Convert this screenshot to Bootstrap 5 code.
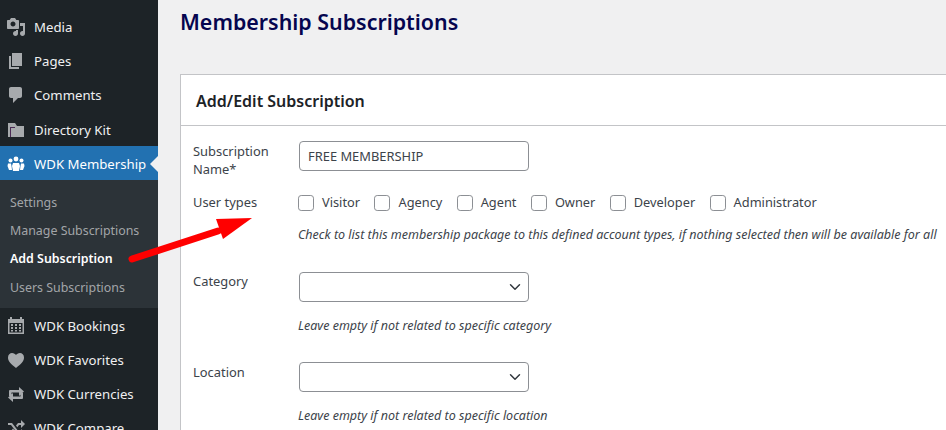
<!DOCTYPE html>
<html lang="en">
<head>
<meta charset="utf-8">
<title>Membership Subscriptions</title>
<link href="https://cdn.jsdelivr.net/npm/bootstrap@5.3.0/dist/css/bootstrap.min.css" rel="stylesheet">
<style>
html,body{height:430px;overflow:hidden}
body{background:#f0f0f1;font-family:"Noto Sans","Open Sans",sans-serif;font-size:12.9px;color:#3c434a;position:relative}
.wp-shell{height:430px;overflow:hidden}
.wp-side{width:158px;flex:none;background:#1d2327;padding-top:9px;height:430px;overflow:hidden}
.wp-item{height:34px;color:#f0f0f1;font-size:13.2px;padding-left:6px;padding-top:4px;gap:8px;white-space:nowrap;position:relative;text-decoration:none}
.wp-item svg{width:20px;height:20px;flex:none;fill:#a7aaad;margin-top:-2px}
.wp-item.wp-on{background:#2271b1;color:#fff;padding-top:3px}
.wp-item.wp-on svg{fill:#fff}
.wp-item.wp-on::after{content:"";position:absolute;right:0;top:10px;border:8px solid transparent;border-right-color:#f0f0f1;border-left-width:0}
.wp-dir{margin-top:1px}
.wp-sub{background:#2c3338;height:128px;padding-top:9px;font-size:12.4px}
.wp-sub a{display:block;height:28.200px;line-height:28px;padding-left:10px;color:#c3c4c7cc;text-decoration:none;white-space:nowrap}
.wp-sub a.wp-cur{color:#fff;font-weight:600}
.wp-main{flex:1;min-width:0;padding-left:22px;overflow:hidden}
.wp-title{font-size:21.4px;font-weight:600;color:#05054f;line-height:28px;margin:8px 0 38px 0}
.wp-panel{background:#fff;border:1px solid #c3c4c7;border-right:0;border-radius:0;width:800px;height:400px}
.wp-head{height:51px;padding-left:15px;border-bottom:1px solid #c3c4c7;font-size:16px;font-weight:600;color:#1d2327;line-height:52px}
.wp-row{display:flex;padding-left:12px}
.wp-lab{width:106px;flex:none;line-height:18px;color:#3c434a}
.wp-input,.wp-select{width:230px;height:30px;font-size:12.9px;color:#3c434a;border:1px solid #8c8f94;border-radius:4px;padding:0 8px;background-color:#fff;font-family:inherit;min-height:30px}
.wp-select{background-position:right 5px center;background-size:16px 12px}
.wp-help{font-style:italic;font-size:12.5px;color:#3c434a;margin:0 0 0 -1px;white-space:nowrap;line-height:18px}
.wp-checks{gap:14.400px;height:18px;margin-left:-1px;font-size:12.8px}
.wp-checks label{display:flex;align-items:center;gap:8px;white-space:nowrap}
.wp-check{width:16px;height:16px;margin:0;border:1px solid #8c8f94;border-radius:4px;flex:none}
.wp-arrow{position:absolute;left:125px;top:210px;width:135px;height:56px}
.wp-r1{margin-top:15px}.wp-r1 .wp-lab{margin-top:1px}
.wp-r2{margin-top:16px}.wp-r2 .wp-lab{margin-top:-1px}
.wp-help.wp-h1{margin-top:14px}
.wp-r3{margin-top:28px}
.wp-help.wp-h2{margin-top:15px}
.wp-r4{margin-top:27px}.wp-r4 .wp-lab{margin-top:1px}
</style>
</head>
<body>
<div class="d-flex wp-shell">
<nav class="wp-side">
<a class="wp-item d-flex align-items-center" href="#"><svg viewBox="0 0 20 20"><path fill-rule="evenodd" d="M13 11V4c0-.55-.45-1-1-1h-1.670L9 1H5L3.670 3H2c-.55 0-1 .45-1 1v7c0 .55.45 1 1 1h10c.55 0 1-.45 1-1zM7 4.500c1.380 0 2.500 1.120 2.500 2.500S8.380 9.500 7 9.500 4.500 8.380 4.500 7 5.620 4.500 7 4.500zM14 6h5v10.500c0 1.380-1.120 2.500-2.500 2.500S14 17.880 14 16.500s1.120-2.500 2.500-2.500c.17 0 .34.020.5.050V9h-3V6zm-4 8.050V13h2v3.500c0 1.380-1.120 2.500-2.500 2.500S7 17.880 7 16.500 8.120 14 9.500 14c.17 0 .34.020.5.050z"/></svg>Media</a>
<a class="wp-item d-flex align-items-center" href="#"><svg viewBox="0 0 20 20"><path d="M6 15V2h10v13H6zm-1 1h8v2H3V5h2v11z"/></svg>Pages</a>
<a class="wp-item d-flex align-items-center" href="#"><svg viewBox="0 0 20 20"><path d="M5 2h9c1.100 0 2 .9 2 2v7c0 1.100-.9 2-2 2h-2l-5 5v-5H5c-1.100 0-2-.9-2-2V4c0-1.100.9-2 2-2z"/></svg>Comments</a>
<a class="wp-item wp-dir d-flex align-items-center" href="#"><svg viewBox="0 0 20 20"><path d="M2 3h7l2 3h7v11H2z"/><path d="M4 7h5v1H5v9H4z" fill="#4b2a55"/></svg>Directory Kit</a>
<a class="wp-item wp-on d-flex align-items-center" href="#"><svg viewBox="0 0 20 20"><circle cx="10" cy="5" r="2.400"/><circle cx="4.500" cy="6.500" r="2"/><circle cx="15.500" cy="6.500" r="2"/><path d="M7 9h6l1 3-1 5H7l-1-5zM2 9.500h3l.5 2.500L6 16H3l-1.500-4zM15 9.500h3l.5 2.500L17 16h-3l.5-4z"/></svg>WDK Membership</a>
<div class="wp-sub">
<a href="#">Settings</a>
<a href="#">Manage Subscriptions</a>
<a href="#" class="wp-cur">Add Subscription</a>
<a href="#">Users Subscriptions</a>
</div>
<a class="wp-item d-flex align-items-center" href="#"><svg viewBox="0 0 20 20"><path fill-rule="evenodd" d="M4 1h2v2h8V1h2v2h2v15H2V3h2zM3.500 7v9.500h13V7zm1.500 1h2v2H5zm4 0h2v2H9zm4 0h2v2h-2zm-8 3h2v2H5zm4 0h2v2H9zm4 0h2v2h-2zm-8 3h2v1.500H5zm4 0h2v1.500H9zm4 0h2v1.500h-2z"/></svg>WDK Bookings</a>
<a class="wp-item d-flex align-items-center" href="#"><svg viewBox="0 0 20 20"><path d="M10 18C5 14 2 11.500 2 7.500 2 4.500 4 3 6 3c2 0 3.200 1 4 2 .8-1 2-2 4-2 2 0 4 1.500 4 4.500 0 4-3 6.500-8 10.500z"/></svg>WDK Favorites</a>
<a class="wp-item d-flex align-items-center" href="#"><svg viewBox="0 0 20 20"><path d="M3 12V7a1 1 0 0 1 1-1h9V3l5 4.500-5 4.500V8.500H5.500V12zM17 9v5a1 1 0 0 1-1 1H7v3l-5-4.500L7 9v3.500h7.500V9z"/></svg>WDK Currencies</a>
<a class="wp-item d-flex align-items-center" href="#"><svg viewBox="0 0 20 20"><path d="M2 5h4l7 9h2v-3l4 4-4 4v-3h-3L5 7H2zM2 13h3l2-2.500 1.300 1.600L6 15H2zM12 5h3V2l4 4-4 4V7h-2l-1.700 2.200L10 7.500z"/></svg>WDK Compare</a>
</nav>
<main class="wp-main">
<h1 class="wp-title">Membership Subscriptions</h1>
<section class="wp-panel">
<div class="wp-head">Add/Edit Subscription</div>
<div class="wp-row wp-r1"><div class="wp-lab">Subscription Name*</div><input class="form-control wp-input" type="text" value="FREE MEMBERSHIP" aria-label="Subscription Name"></div>
<div class="wp-row wp-r2"><div class="wp-lab">User types</div>
<div>
<div class="d-flex wp-checks">
<label><input class="form-check-input wp-check" type="checkbox">Visitor</label>
<label><input class="form-check-input wp-check" type="checkbox">Agency</label>
<label><input class="form-check-input wp-check" type="checkbox">Agent</label>
<label><input class="form-check-input wp-check" type="checkbox">Owner</label>
<label><input class="form-check-input wp-check" type="checkbox">Developer</label>
<label><input class="form-check-input wp-check" type="checkbox">Administrator</label>
</div>
<p class="wp-help wp-h1">Check to list this membership package to this defined account types, if nothing selected then will be available for all</p>
</div></div>
<div class="wp-row wp-r3"><div class="wp-lab">Category</div><div><select class="form-select wp-select" aria-label="Category"><option></option></select><p class="wp-help wp-h2">Leave empty if not related to specific category</p></div></div>
<div class="wp-row wp-r4"><div class="wp-lab">Location</div><div><select class="form-select wp-select" aria-label="Location"><option></option></select><p class="wp-help wp-h2">Leave empty if not related to specific location</p></div></div>
</section>
</main>
</div>
<svg class="wp-arrow" viewBox="0 0 135 56" aria-hidden="true"><path d="M7 49 L93 21" stroke="#f00" stroke-width="7" stroke-linecap="round" fill="none"/><path d="M91 9 L127 8 L98 29 Z" fill="#f00"/></svg>
</body>
</html>
